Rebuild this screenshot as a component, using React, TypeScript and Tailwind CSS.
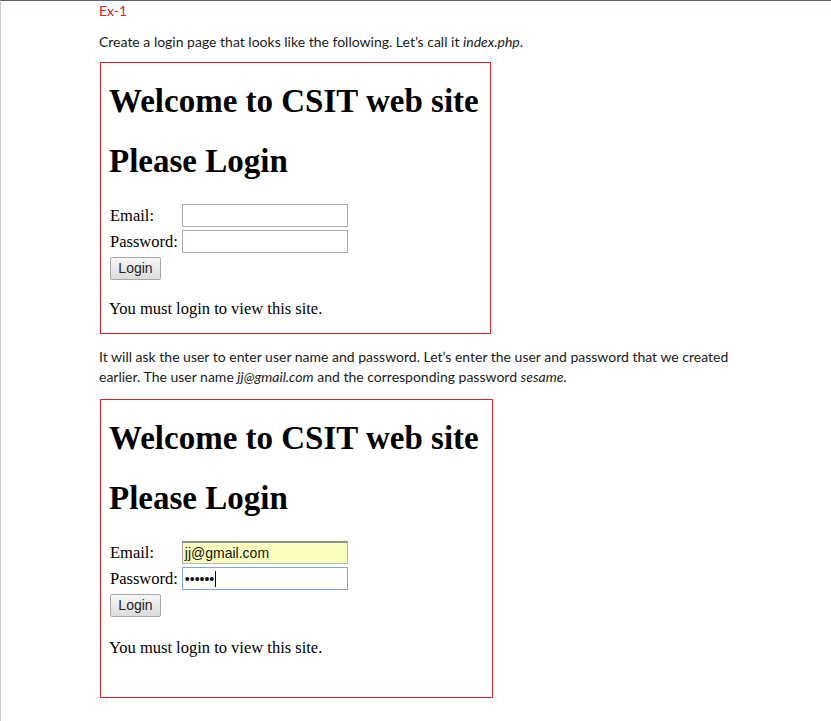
const body = "font-['Lato','Open_Sans',sans-serif] text-[14px] text-[#1a1a1a]";
const serif = "font-['Liberation_Serif','Times_New_Roman',serif]";

function Field({ value, kind }: { value?: string; kind: "plain" | "filled" | "focus" }) {
  const look =
    kind === "filled"
      ? "bg-[#fbffbe] border-[#b5b5b5] border-t-[#8f8f8f] border-t-2 border-l-[#a0a0a0]"
      : kind === "focus"
        ? "bg-white border-[#7fa6e2]"
        : "bg-white border-[#ababab]";
  return (
    <div
      className={`w-[166px] h-[23px] border ${look} flex items-center px-[2px] font-['Liberation_Sans',Arial,sans-serif] text-[14px] text-[#111]`}
    >
      {value}
      {kind === "focus" && <span className="w-px h-[16px] bg-black ml-px" />}
    </div>
  );
}

function LoginBox({ filled, width, height }: { filled?: boolean; width: string; height: string }) {
  return (
    <div className={`ml-px ${width} ${height} border border-[#d7262b] ${serif} text-black pl-[8px] pt-[19px]`}>
      <h1 className="text-[33px] leading-[38px] font-bold">Welcome to CSIT web site</h1>
      <h1 className="text-[33px] leading-[38px] font-bold mt-[22px]">Please Login</h1>
      <div className="mt-[24px] pl-[1px] grid grid-cols-[auto_auto] justify-start gap-x-[4px] gap-y-[3px] items-center text-[16.5px] leading-[20px]">
        <span>Email:</span>
        <Field kind={filled ? "filled" : "plain"} value={filled ? "jj@gmail.com" : undefined} />
        <span>Password:</span>
        <Field kind={filled ? "focus" : "plain"} value={filled ? "••••••" : undefined} />
      </div>
      <button className="mt-[4px] ml-[1px] w-[51px] h-[23px] border border-[#a7a7a7] rounded-[2px] bg-gradient-to-b from-[#f7f7f7] to-[#dcdcdc] font-['Liberation_Sans',Arial,sans-serif] text-[14px] text-[#222]">
        Login
      </button>
      <p className={`${filled ? "mt-[21px]" : "mt-[19px]"} text-[16.5px] leading-[20px]`}>
        You must login to view this site.
      </p>
    </div>
  );
}

export default function App() {
  return (
    <div className="w-[831px] h-[721px] bg-white border-t border-t-[#56616b] border-l border-l-[#cacaca] overflow-hidden">
      <div className={`pl-[98px] ${body}`}>
        <p className="text-[#e0201b] leading-[16px] pt-[2px]">Ex-1</p>
        <p className="mt-[15px] leading-[16px]">
          Create a login page that looks like the following. Let’s call it <i>index.php</i>.
        </p>
        <div className="mt-[12px]">
          <LoginBox width="w-[391px]" height="h-[272px]" />
        </div>
        <p className="mt-[13px] leading-[20px] w-[640px]">
          It will ask the user to enter user name and password. Let’s enter the user and password that we created
          earlier. The user name <i>jj@gmail.com</i> and the corresponding password <i>sesame</i>.
        </p>
        <div className="mt-[12px]">
          <LoginBox filled width="w-[393px]" height="h-[299px]" />
        </div>
      </div>
    </div>
  );
}
